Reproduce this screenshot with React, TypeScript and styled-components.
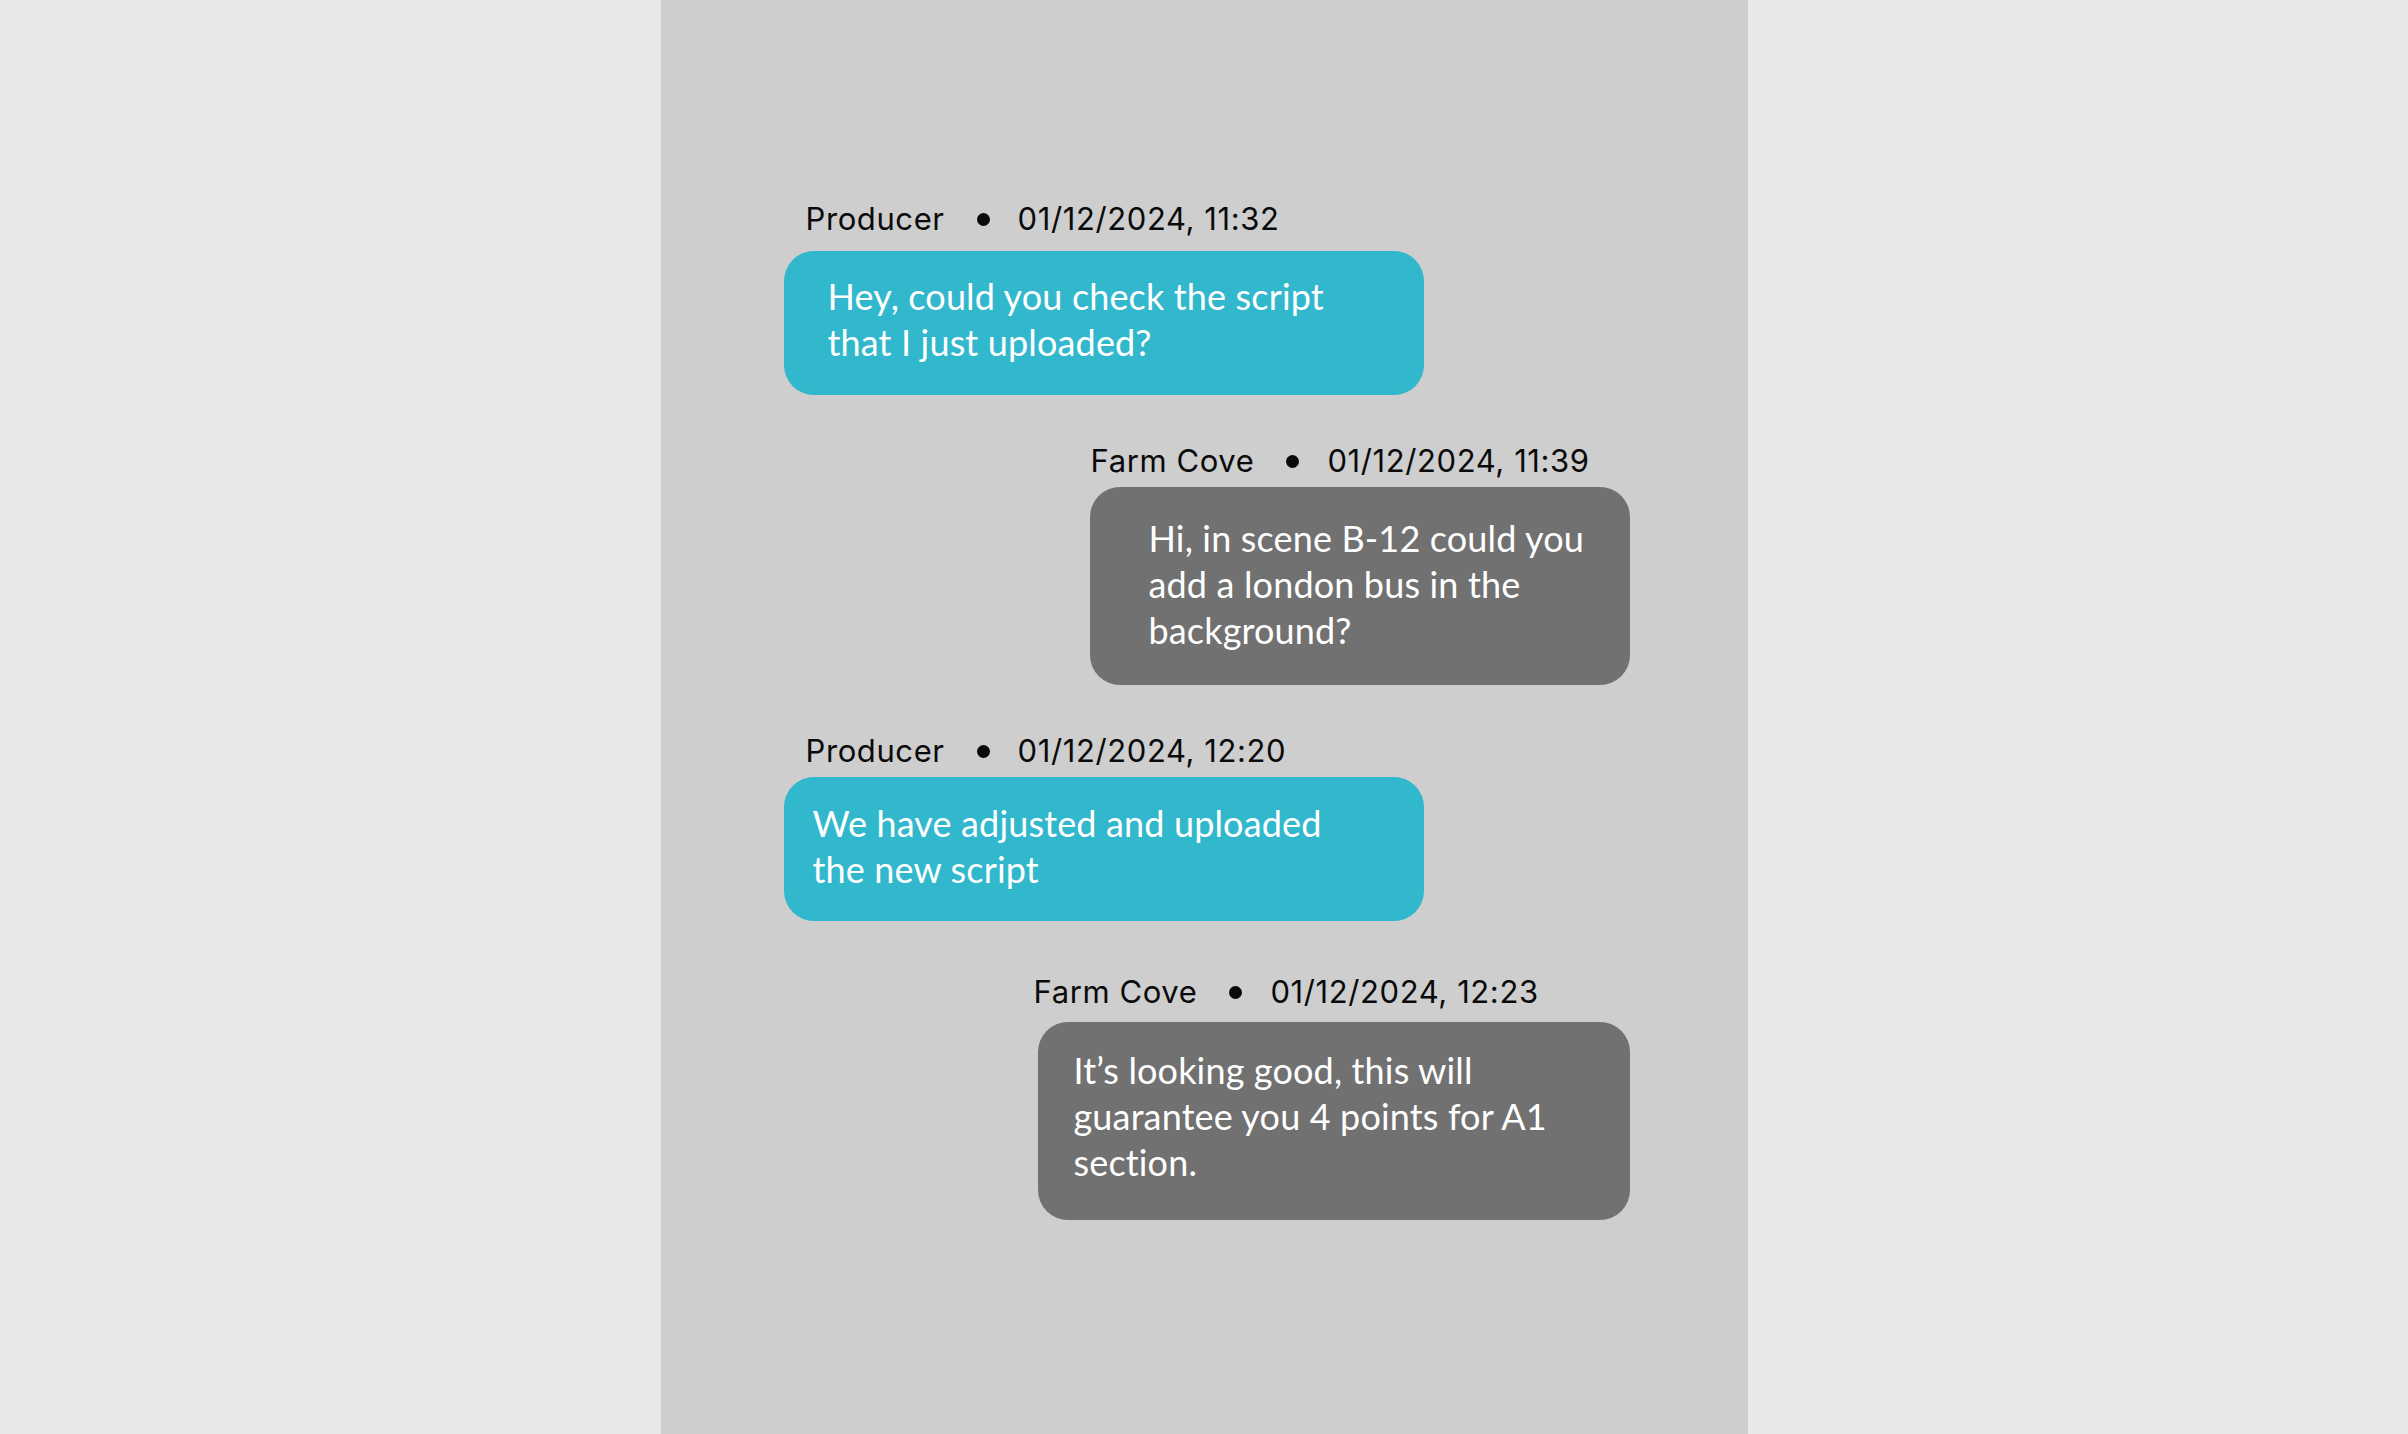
import React from "react";
import styled, { createGlobalStyle } from "styled-components";

const GlobalStyle = createGlobalStyle`
  html, body {
    margin: 0;
    padding: 0;
    background: #e8e8e8;
  }
  * { box-sizing: border-box; }
`;

const Page = styled.div`
  display: flex;
  justify-content: center;
  min-height: 100vh;
  background: #e8e8e8;
`;

const Panel = styled.main`
  width: 1087px;
  min-height: 100vh;
  background: #cecece;
  display: flex;
  flex-direction: column;
  padding: 201px 118px 0 123px;
`;

const Message = styled.section<{ $side: "left" | "right"; $width: number; $space: number }>`
  display: flex;
  flex-direction: column;
  align-items: flex-start;
  width: ${(p) => p.$width}px;
  margin-top: ${(p) => p.$space}px;
  align-self: ${(p) => (p.$side === "left" ? "flex-start" : "flex-end")};
`;

const Meta = styled.header<{ $indent: number; $gap: number }>`
  display: flex;
  align-items: center;
  margin-left: ${(p) => p.$indent}px;
  margin-bottom: ${(p) => p.$gap}px;
  font-family: Inter, "Noto Sans", sans-serif;
  font-size: 31px;
  letter-spacing: 0.6px;
  line-height: 36px;
  color: #0a0a0a;
  white-space: nowrap;
`;

const Dot = styled.span`
  width: 13px;
  height: 13px;
  margin: 0 28px 0 32px;
  border-radius: 50%;
  background: #0a0a0a;
  flex: none;
`;

const Bubble = styled.div<{ $tone: "cyan" | "gray"; $pad: string }>`
  width: 100%;
  padding: ${(p) => p.$pad};
  border-radius: 30px;
  background: ${(p) => (p.$tone === "cyan" ? "#32b8cd" : "#717171")};
  color: #ffffff;
  font-family: Lato, "Open Sans", sans-serif;
  font-size: 36px;
  letter-spacing: 0.15px;
  line-height: 46px;
  white-space: pre-line;
`;

type Msg = {
  who: string;
  when: string;
  side: "left" | "right";
  width: number;
  space: number;
  indent: number;
  gap: number;
  pad: string;
  text: string;
};

const messages: Msg[] = [
  {
    who: "Producer",
    when: "01/12/2024, 11:32",
    side: "left",
    width: 640,
    space: 0,
    indent: 22,
    gap: 14,
    pad: "22px 0 30px 44px",
    text: "Hey, could you check the script\nthat I just uploaded?",
  },
  {
    who: "Farm Cove",
    when: "01/12/2024, 11:39",
    side: "right",
    width: 540,
    space: 48,
    indent: 1,
    gap: 8,
    pad: "28px 0 32px 59px",
    text: "Hi, in scene B-12 could you\nadd a london bus in the\nbackground?",
  },
  {
    who: "Producer",
    when: "01/12/2024, 12:20",
    side: "left",
    width: 640,
    space: 48,
    indent: 22,
    gap: 8,
    pad: "23px 0 29px 29px",
    text: "We have adjusted and uploaded\nthe new script",
  },
  {
    who: "Farm Cove",
    when: "01/12/2024, 12:23",
    side: "right",
    width: 592,
    space: 53,
    indent: -4,
    gap: 12,
    pad: "25px 0 35px 36px",
    text: "It\u2019s looking good, this will\nguarantee you 4 points for A1\nsection.",
  },
];

export default function App() {
  return (
    <Page>
      <GlobalStyle />
      <Panel>
        {messages.map((m, i) => (
          <Message key={i} $side={m.side} $width={m.width} $space={m.space}>
            <Meta $indent={m.indent} $gap={m.gap}>
              <span>{m.who}</span>
              <Dot />
              <span>{m.when}</span>
            </Meta>
            <Bubble $tone={m.side === "left" ? "cyan" : "gray"} $pad={m.pad}>
              {m.text}
            </Bubble>
          </Message>
        ))}
      </Panel>
    </Page>
  );
}
